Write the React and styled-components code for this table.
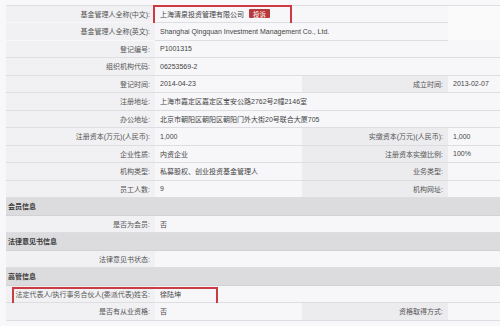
import React from "react";
import styled, { createGlobalStyle } from "styled-components";

const GlobalStyle = createGlobalStyle`
  html, body {
    margin: 0;
    padding: 0;
    background: #f8f8fa;
    overflow: hidden;
  }
  body {
    font-family: "Liberation Sans", "Noto Sans CJK SC", sans-serif;
    font-size: 7px;
    color: #444;
  }
`;

const Page = styled.div`
  width: 500px;
  height: 326px;
  padding: 4.5px 0 0 6px;
  box-sizing: border-box;
`;

const Table = styled.div`
  border-top: 1px solid #dedee2;
`;

const Row = styled.div`
  position: relative;
  display: grid;
  grid-template-columns: 149px 147px 146px 1fr;
  height: 17.5px;
  box-sizing: border-box;
  border-bottom: 1px solid ${(p) => (p.$short ? "transparent" : "#dedee2")};
`;

const Label = styled.div`
  display: flex;
  align-items: center;
  justify-content: flex-end;
  padding-right: 5px;
  background: ${(p) => (p.$side ? "#ececef" : "#f1f1f3")};
  color: #555;
  white-space: nowrap;
`;

const Value = styled.div`
  display: flex;
  align-items: center;
  padding-left: 5px;
  background: #f7f7f9;
  white-space: nowrap;
  grid-column: ${(p) => p.$span || "auto"};
  border-bottom: ${(p) => (p.$short ? "1px solid #dedee2" : "none")};
  margin-bottom: ${(p) => (p.$short ? "-1px" : "0")};
`;

const Blank = styled.div`
  background: #fafafb;
`;

const Section = styled.div`
  display: flex;
  align-items: center;
  height: 17.5px;
  box-sizing: border-box;
  padding-left: 2px;
  background: #dcdcde;
  border-bottom: 1px solid #d2d2d4;
  font-weight: bold;
  color: #3a3a3a;
`;

const Badge = styled.span`
  display: inline-flex;
  align-items: center;
  height: 9px;
  margin-left: 5px;
  padding: 0 4px;
  background: #b8393c;
  color: #fff;
  font-size: 6.5px;
  border-radius: 1px;
`;

const Highlight = styled.div`
  position: absolute;
  left: ${(p) => p.$left}px;
  top: ${(p) => p.$top}px;
  width: ${(p) => p.$width}px;
  height: ${(p) => p.$height}px;
  box-sizing: border-box;
  border: 2px solid #cc3a44;
  pointer-events: none;
`;

const rows = [
  { type: "full", label: "基金管理人全称(中文):", value: "上海清泉投资管理有限公司", badge: "投诉", short: true,
    box: { left: 147, top: -0.5, width: 139, height: 23 } },
  { type: "full", label: "基金管理人全称(英文):", value: "Shanghai Qingquan Investment Management Co., Ltd.", short: true },
  { type: "full", label: "登记编号:", value: "P1001315" },
  { type: "full", label: "组织机构代码:", value: "06253569-2" },
  { type: "pair", label: "登记时间:", value: "2014-04-23", label2: "成立时间:", value2: "2013-02-07" },
  { type: "full", label: "注册地址:", value: "上海市嘉定区嘉定区宝安公路2762号2幢2146室" },
  { type: "full", label: "办公地址:", value: "北京市朝阳区朝阳区朝阳门外大街20号联合大厦705" },
  { type: "pair", label: "注册资本(万元)(人民币):", value: "1,000", label2: "实缴资本(万元)(人民币):", value2: "1,000" },
  { type: "pair", label: "企业性质:", value: "内资企业", label2: "注册资本实缴比例:", value2: "100%" },
  { type: "pair", label: "机构类型:", value: "私募股权、创业投资基金管理人", label2: "业务类型:", value2: "" },
  { type: "pair", label: "员工人数:", value: "9", label2: "机构网址:", value2: "" },
  { type: "section", title: "会员信息" },
  { type: "full", label: "是否为会员:", value: "否" },
  { type: "section", title: "法律意见书信息" },
  { type: "full", label: "法律意见书状态:", value: "" },
  { type: "section", title: "高管信息" },
  { type: "full", label: "法定代表人/执行事务合伙人(委派代表)姓名:", value: "徐陆坤",
    box: { left: 6, top: 1.5, width: 206, height: 20 } },
  { type: "pair", label: "是否有从业资格:", value: "否", label2: "资格取得方式:", value2: "" },
];

const InfoRow = ({ row }) => {
  if (row.type === "section") return <Section>{row.title}</Section>;

  return (
    <Row $short={row.short}>
      <Label>{row.label}</Label>
      {row.type === "full" ? (
        <>
          <Value $span={row.short ? "2 / 4" : "2 / 5"} $short={row.short}>
            {row.value}
            {row.badge && <Badge>{row.badge}</Badge>}
          </Value>
          {row.short && <Blank />}
        </>
      ) : (
        <>
          <Value>{row.value}</Value>
          <Label $side>{row.label2}</Label>
          <Value>{row.value2}</Value>
        </>
      )}
      {row.box && (
        <Highlight
          $left={row.box.left}
          $top={row.box.top}
          $width={row.box.width}
          $height={row.box.height}
        />
      )}
    </Row>
  );
};

const App = () => (
  <>
    <GlobalStyle />
    <Page>
      <Table>
        {rows.map((row, i) => (
          <InfoRow key={i} row={row} />
        ))}
      </Table>
    </Page>
  </>
);

export default App;
